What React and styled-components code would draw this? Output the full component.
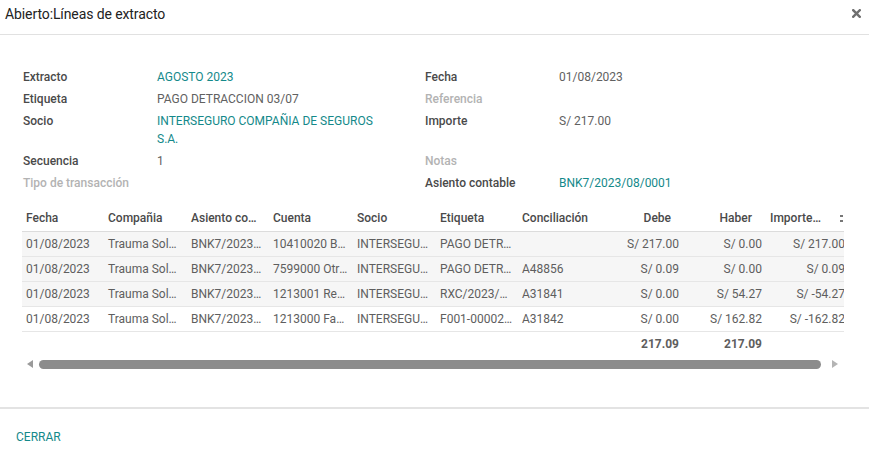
import React from "react";
import styled, { createGlobalStyle } from "styled-components";

const Global = createGlobalStyle`
  html, body { margin: 0; padding: 0; background: #fff; }
  body { font-family: Roboto, "Noto Sans", sans-serif; font-size: 12px; color: #4c4c4c; }
  * { box-sizing: border-box; }
`;

const LINK = "#14898a";

const Modal = styled.div`
  height: 452px;
  width: 869px;
  display: flex;
  flex-direction: column;
  background: #fff;
`;

const Header = styled.header`
  height: 35px;
  border-bottom: 1px solid #e1e1e1;
  display: flex;
  justify-content: space-between;
  align-items: flex-start;
  padding: 5px 8px 0 5px;
`;

const Title = styled.h4`
  margin: 0;
  font-size: 14px;
  line-height: 18px;
  font-weight: 400;
  color: #222;
  letter-spacing: -0.1px;
`;

const CloseBtn = styled.button`
  border: 0;
  background: none;
  padding: 0;
  margin-top: 3px;
  width: 10px;
  height: 10px;
  display: flex;
  align-items: center;
  justify-content: center;
  cursor: pointer;
`;

const Body = styled.div`
  flex: 1;
  padding: 31px 25px 0 22px;
`;

const FormGrid = styled.div`
  display: grid;
  grid-template-columns: 135px 230px 37px 135px 1fr;
  align-items: start;
`;

const Label = styled.div`
  grid-column: ${(p) => (p.$right ? 4 : 1)};
  padding: 2px 0 2px 1px;
  line-height: 18px;
  font-weight: 500;
  color: ${(p) => (p.$muted ? "#b3b3b3" : "#4a4a4a")};
`;

const Value = styled.div`
  grid-column: ${(p) => (p.$right ? 5 : 2)};
  padding: 2px 0;
  line-height: 18px;
  color: ${(p) => (p.$link ? LINK : "#616161")};
`;

const TableWrap = styled.div`
  position: relative;
  margin-top: 11px;
  width: 822px;
  overflow: hidden;
`;

const Table = styled.table`
  border-collapse: collapse;
  table-layout: fixed;
  width: 870px;
`;

const Th = styled.th`
  height: 26px;
  padding: 0 ${(p) => p.$pr || 4}px 0 4px;
  text-align: ${(p) => (p.$num ? "right" : "left")};
  font-weight: 500;
  color: #4a4a4a;
  white-space: nowrap;
  overflow: hidden;
  text-overflow: ellipsis;
  border-bottom: 1px solid #dcdcdc;
`;

const Tr = styled.tr`
  background: ${(p) => (p.$shade ? "#f6f6f6" : "#fff")};
`;

const Td = styled.td`
  height: 25px;
  padding: 0 4px;
  text-align: ${(p) => (p.$num ? "right" : "left")};
  color: #5e5e5e;
  white-space: nowrap;
  overflow: hidden;
  text-overflow: ellipsis;
  border-top: 1px solid #e6e6e6;
  font-weight: ${(p) => (p.$bold ? 700 : 400)};
`;

const Toggler = styled.span`
  position: absolute;
  left: 818px;
  top: 10px;
  width: 3px;
  height: 7px;
  display: flex;
  flex-direction: column;
  justify-content: space-between;
  & > i {
    display: block;
    width: 3px;
    height: 2px;
    background: #777;
  }
`;

const ScrollBar = styled.div`
  margin-top: 3px;
  width: 822px;
  height: 10px;
  display: flex;
  align-items: center;
`;

const ArrowBtn = styled.div`
  width: 16px;
  height: 10px;
  display: flex;
  align-items: center;
  justify-content: center;
  margin-left: ${(p) => (p.$dir === "right" ? "6px" : "0")};
  &::before {
    content: "";
    width: 0;
    height: 0;
    border-top: 4px solid transparent;
    border-bottom: 4px solid transparent;
    ${(p) =>
      p.$dir === "right"
        ? "border-left: 6px solid #b4b4b4;"
        : "border-right: 6px solid #9a9a9a;"}
  }
`;

const Thumb = styled.div`
  margin-left: 1px;
  width: 782px;
  height: 9px;
  border-radius: 5px;
  background: #8c8c8c;
`;

const Footer = styled.footer`
  border-top: 2px solid #e3e3e3;
  height: 45px;
  padding: 0 0 0 16px;
  display: flex;
  align-items: center;
`;

const FooterBtn = styled.button`
  border: 0;
  background: none;
  padding: 0;
  margin-top: 12px;
  font-family: inherit;
  font-size: 12px;
  line-height: 18px;
  color: ${LINK};
  text-transform: uppercase;
  cursor: pointer;
`;

const cols = [
  { key: "fecha", label: "Fecha", w: 82 },
  { key: "comp", label: "Compañia", w: 83 },
  { key: "asiento", label: "Asiento contable", w: 82, pr: 8 },
  { key: "cuenta", label: "Cuenta", w: 84 },
  { key: "socio", label: "Socio", w: 83 },
  { key: "etiqueta", label: "Etiqueta", w: 82 },
  { key: "conc", label: "Conciliación", w: 82 },
  { key: "debe", label: "Debe", w: 83, num: true, pr: 12 },
  { key: "haber", label: "Haber", w: 83, num: true, pr: 14 },
  { key: "imp", label: "Importe en moneda", w: 83, num: true, pr: 27 },
  { key: "x", label: "", w: 43 },
];

const common = {
  fecha: "01/08/2023",
  comp: "Trauma Solutions S.A.C.",
  asiento: "BNK7/2023/08/0001",
  socio: "INTERSEGURO COMPAÑIA DE SEGUROS S.A.",
};

const rows = [
  { ...common, cuenta: "10410020 Banco Nación", etiqueta: "PAGO DETRACCION 03/07", conc: "", debe: "S/ 217.00", haber: "S/ 0.00", imp: "S/ 217.00", shade: true },
  { ...common, cuenta: "7599000 Otros ingresos", etiqueta: "PAGO DETRACCION 03/07", conc: "A48856", debe: "S/ 0.09", haber: "S/ 0.00", imp: "S/ 0.09", shade: true },
  { ...common, cuenta: "1213001 Renta de cuarta", etiqueta: "RXC/2023/0001", conc: "A31841", debe: "S/ 0.00", haber: "S/ 54.27", imp: "S/ -54.27", shade: true },
  { ...common, cuenta: "1213000 Facturas", etiqueta: "F001-00002345", conc: "A31842", debe: "S/ 0.00", haber: "S/ 162.82", imp: "S/ -162.82", shade: false },
];

function CloseIcon() {
  return (
    <svg width="9" height="9" viewBox="0 0 9 9">
      <path d="M1.2 1.2 L7.8 7.8 M7.8 1.2 L1.2 7.8" stroke="#6f6f6f" strokeWidth="2.4" strokeLinecap="square" />
    </svg>
  );
}

export default function App() {
  return (
    <>
      <Global />
      <Modal>
        <Header>
          <Title>Abierto:Líneas de extracto</Title>
          <CloseBtn aria-label="Cerrar">
            <CloseIcon />
          </CloseBtn>
        </Header>
        <Body>
          <FormGrid>
            <Label>Extracto</Label>
            <Value $link>AGOSTO 2023</Value>
            <Label $right>Fecha</Label>
            <Value $right>01/08/2023</Value>

            <Label>Etiqueta</Label>
            <Value>PAGO DETRACCION 03/07</Value>
            <Label $right $muted>Referencia</Label>
            <Value $right></Value>

            <Label>Socio</Label>
            <Value $link>INTERSEGURO COMPAÑIA DE SEGUROS S.A.</Value>
            <Label $right>Importe</Label>
            <Value $right>S/ 217.00</Value>

            <Label>Secuencia</Label>
            <Value>1</Value>
            <Label $right $muted>Notas</Label>
            <Value $right></Value>

            <Label $muted>Tipo de transacción</Label>
            <Value></Value>
            <Label $right>Asiento contable</Label>
            <Value $right $link>BNK7/2023/08/0001</Value>
          </FormGrid>

          <TableWrap>
            <Table>
              <colgroup>
                {cols.map((c) => (
                  <col key={c.key} style={{ width: c.w }} />
                ))}
              </colgroup>
              <thead>
                <tr>
                  {cols.map((c) => (
                    <Th key={c.key} $num={c.num} $pr={c.pr}>
                      {c.label}
                    </Th>
                  ))}
                </tr>
              </thead>
              <tbody>
                {rows.map((r, i) => (
                  <Tr key={i} $shade={r.shade}>
                    {cols.map((c) => (
                      <Td key={c.key} $num={c.num}>
                        {r[c.key]}
                      </Td>
                    ))}
                  </Tr>
                ))}
                <Tr>
                  {cols.map((c) => (
                    <Td key={c.key} $num={c.num} $bold>
                      {c.key === "debe" || c.key === "haber" ? "217.09" : ""}
                    </Td>
                  ))}
                </Tr>
              </tbody>
            </Table>
            <Toggler>
              <i />
              <i />
            </Toggler>
          </TableWrap>
          <ScrollBar>
            <ArrowBtn $dir="left" />
            <Thumb />
            <ArrowBtn $dir="right" />
          </ScrollBar>
        </Body>
        <Footer>
          <FooterBtn>Cerrar</FooterBtn>
        </Footer>
      </Modal>
    </>
  );
}
